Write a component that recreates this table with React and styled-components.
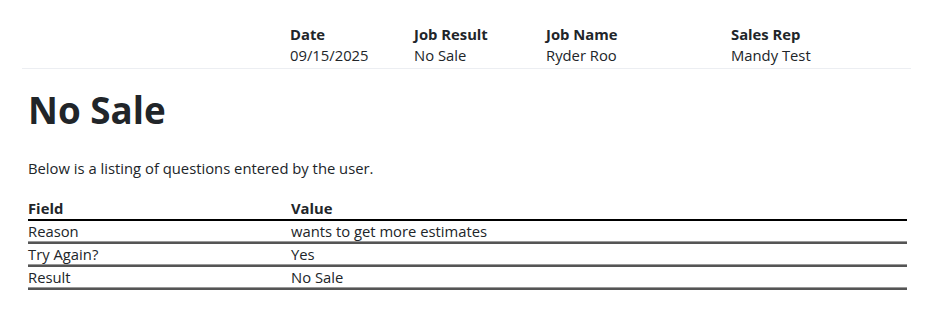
import React from "react";
import styled, { createGlobalStyle } from "styled-components";

const Global = createGlobalStyle`
  body {
    margin: 0;
    background: #fff;
    font-family: "Open Sans", "Liberation Sans", sans-serif;
    color: #212529;
  }
`;

const Page = styled.div`
  width: 936px;
  padding: 24px 25px 0 22px;
  box-sizing: border-box;
`;

const InfoBar = styled.div`
  display: grid;
  grid-template-columns: 268px 124px 132px 185px 1fr;
  padding-bottom: 2px;
  border-bottom: 1px solid #eceef2;
`;

const InfoCell = styled.div`
  font-size: 14.8px;
  line-height: 21px;
`;

const InfoLabel = styled.div`
  font-weight: 700;
`;

const Body = styled.div`
  padding: 0 4px 0 6px;
`;

const Title = styled.h1`
  margin: 17px 0 0;
  font-size: 36.8px;
  line-height: 48px;
  font-weight: 700;
`;

const Intro = styled.p`
  margin: 24px 0 20px;
  font-size: 14.8px;
  line-height: 20px;
`;

const Table = styled.table`
  width: 100%;
  border-collapse: collapse;
  font-size: 14.8px;
`;

const Th = styled.th`
  text-align: left;
  vertical-align: top;
  font-weight: 700;
  padding: 0;
  height: 21px;
  line-height: 20px;
  width: ${(p) => p.$w || "auto"};
  border-bottom: 2px solid #000;
`;

const Td = styled.td`
  vertical-align: top;
  padding: 0;
  height: 21px;
  line-height: 20px;
  border-bottom: 2px solid #555;
  box-shadow: inset 0 -1px 0 #999;
`;

const info = [
  ["Date", "09/15/2025"],
  ["Job Result", "No Sale"],
  ["Job Name", "Ryder Roo"],
  ["Sales Rep", "Mandy Test"],
];

const rows = [
  ["Reason", "wants to get more estimates"],
  ["Try Again?", "Yes"],
  ["Result", "No Sale"],
];

export default function App() {
  return (
    <>
      <Global />
      <Page>
        <InfoBar>
          <div />
          {info.map(([label, value]) => (
            <InfoCell key={label}>
              <InfoLabel>{label}</InfoLabel>
              <div>{value}</div>
            </InfoCell>
          ))}
        </InfoBar>
        <Body>
          <Title>No Sale</Title>
          <Intro>Below is a listing of questions entered by the user.</Intro>
          <Table>
            <thead>
              <tr>
                <Th $w="263px">Field</Th>
                <Th>Value</Th>
              </tr>
            </thead>
            <tbody>
              {rows.map(([field, value]) => (
                <tr key={field}>
                  <Td>{field}</Td>
                  <Td>{value}</Td>
                </tr>
              ))}
            </tbody>
          </Table>
        </Body>
      </Page>
    </>
  );
}
